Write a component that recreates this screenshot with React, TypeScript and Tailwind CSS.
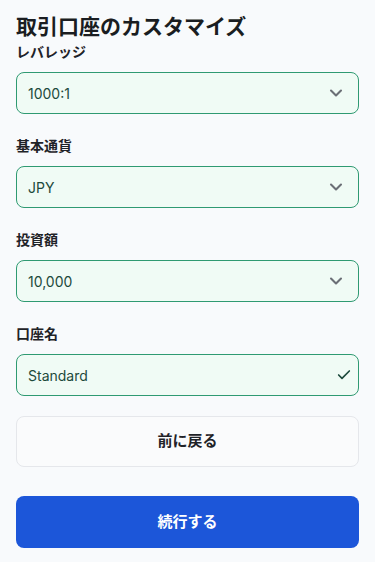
import { ChevronDown, Check } from "lucide-react";

const font = { fontFamily: '"Inter", "Noto Sans CJK JP", sans-serif' };

function SelectField({ label, value, icon = "chevron" }: { label: string; value: string; icon?: "chevron" | "check" }) {
  return (
    <div className="flex flex-col gap-[10px]">
      <label className="text-[14px] font-semibold leading-[20px] text-[#1f2328]">{label}</label>
      <div className="flex h-[42px] items-center justify-between rounded-lg border border-[#2f9a72] bg-[#f0fbf5] pl-[11px] pr-3">
        <span className="text-[14px] text-[#1d4a3c]">{value}</span>
        {icon === "chevron" ? (
          <ChevronDown className="h-5 w-5 text-[#6b6f76]" strokeWidth={2.5} />
        ) : (
          <Check className="-mr-[6px] h-4 w-4 text-[#1d4a3c]" strokeWidth={2.5} />
        )}
      </div>
    </div>
  );
}

export default function App() {
  return (
    <div className="min-h-[562px] w-full bg-[#f8fafc] px-4 pt-3" style={font}>
      <h1 className="text-[21px] font-bold leading-[30px] text-[#1a1d21]">取引口座のカスタマイズ</h1>

      <div className="flex flex-col gap-[22px]">
        <SelectField label="レバレッジ" value="1000:1" />
        <SelectField label="基本通貨" value="JPY" />
        <SelectField label="投資額" value="10,000" />
        <SelectField label="口座名" value="Standard" icon="check" />
      </div>

      <button className="mt-[20px] flex h-[51px] w-full items-center justify-center rounded-lg border border-[#e5e7eb] bg-[#fafbfc] text-[15px] font-semibold text-[#1f2328]">
        前に戻る
      </button>

      <button className="mt-[29px] flex h-[52px] w-full items-center justify-center rounded-lg bg-[#1c56d9] text-[15px] font-bold text-white">
        続行する
      </button>
    </div>
  );
}
